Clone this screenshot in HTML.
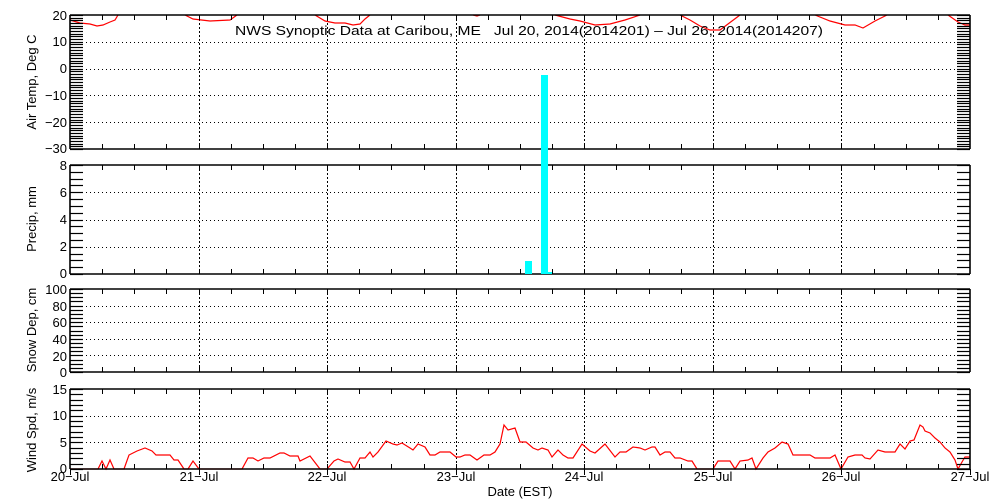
<!DOCTYPE html>
<html><head><meta charset="utf-8"><style>
html,body{margin:0;padding:0;background:#fff;width:1000px;height:500px;overflow:hidden}
svg{display:block}
text{font-family:"Liberation Sans",sans-serif;font-size:13px;fill:#000}
</style></head><body>
<svg id="s" width="1000" height="500" xmlns="http://www.w3.org/2000/svg">
<g id="g"></g>
<polyline fill="none" stroke="#f00" stroke-width="1.2" points="70,20 80,23 90,24 97,26 103,25 110,22 115,20 118,15"/>
<polyline fill="none" stroke="#f00" stroke-width="1.2" points="185,15 193,19 210,21 230,20 237,15"/>
<polyline fill="none" stroke="#f00" stroke-width="1.2" points="315,15 325,21 335,23 345,23 353,25 360,24 365,19 370,15"/>
<polyline fill="none" stroke="#f00" stroke-width="1.2" points="473,15 477,16 480,15"/>
<polyline fill="none" stroke="#f00" stroke-width="1.2" points="555,15 570,19 580,21 595,25 610,24 625,20 640,15"/>
<polyline fill="none" stroke="#f00" stroke-width="1.2" points="680,15 690,20 700,26 710,30 720,30 740,15"/>
<polyline fill="none" stroke="#f00" stroke-width="1.2" points="815,15 830,21 845,25 855,25 863,28 875,21 887,15"/>
<polyline fill="none" stroke="#f00" stroke-width="1.2" points="948,15 958,22 965,25 970,25"/>
<polyline fill="none" stroke="#f00" stroke-width="1.2" points="70,469 98,469 102,461 106,469 110,460 114,469 124,469 129,455 137,451 145,448 152,451 156,455 170,455 174,460 178,460 184,469 188,469 193,461 199,469 242,469 248,458 253,458 258,461 264,458 270,458 280,453 284,453 290,456 298,456 300,461 310,456 320,469 327,469 334,461 338,459 345,462 350,462 354,469 360,458 365,458 370,452 373,457 378,452 386,441 393,444 397,445 402,443 410,448 413,450 418,444 425,447 430,455 435,455 440,452 450,452 456,457 460,457 465,455 470,455 477,460 484,455 490,455 495,452 500,444 504,425 508,430 515,428 520,442 526,442 533,448 538,450 542,448 548,450 552,457 558,450 563,455 568,458 573,458 582,444 590,451 595,453 605,444 615,457 620,452 626,452 633,447 640,448 645,450 652,447 655,447 660,455 665,452 670,452 675,458 680,458 688,461 692,461 697,469 713,469 718,461 730,461 735,469 740,461 748,460 752,458 756,469 763,458 768,452 775,448 782,442 788,444 793,455 810,455 815,458 830,458 835,455 841,469 848,457 855,455 862,455 865,458 870,459 878,450 885,452 895,452 900,444 905,449 910,441 914,440 920,425 923,427 925,431 930,433 935,438 940,442 945,448 950,452 955,460 958,469 962,462 965,457 970,457"/>
<g id="fr"></g>
<rect x="541" y="75" width="7" height="199" fill="#0ff"/>
<rect x="525" y="261" width="7" height="13" fill="#0ff"/>
<rect x="548" y="272" width="4" height="2" fill="#0ff"/>
<text x="235" y="35" textLength="588" lengthAdjust="spacingAndGlyphs" style="white-space:pre" xml:space="preserve">NWS Synoptic Data at Caribou, ME   Jul 20, 2014(2014201) – Jul 26, 2014(2014207)</text>
<g text-anchor="end">
<text x="67" y="20">20</text><text x="67" y="46">10</text><text x="67" y="73">0</text><text x="67" y="100">−10</text><text x="67" y="127">−20</text><text x="67" y="153">−30</text>
<text x="67" y="170">8</text><text x="67" y="197">6</text><text x="67" y="224">4</text><text x="67" y="251">2</text><text x="67" y="278">0</text>
<text x="67" y="294">100</text><text x="67" y="311">80</text><text x="67" y="327">60</text><text x="67" y="344">40</text><text x="67" y="361">20</text><text x="67" y="377">0</text>
<text x="67" y="394">15</text><text x="67" y="420">10</text><text x="67" y="447">5</text><text x="67" y="473">0</text>
</g>
<g text-anchor="middle">
<text x="70" y="481">20−Jul</text><text x="199" y="481">21−Jul</text><text x="327" y="481">22−Jul</text><text x="456" y="481">23−Jul</text><text x="584" y="481">24−Jul</text><text x="713" y="481">25−Jul</text><text x="841" y="481">26−Jul</text><text x="970" y="481">27−Jul</text>
<text x="520" y="496">Date (EST)</text>
<text transform="translate(36,82) rotate(-90)">Air Temp, Deg C</text>
<text transform="translate(36,219) rotate(-90)">Precip, mm</text>
<text transform="translate(36,330) rotate(-90)">Snow Dep, cm</text>
<text transform="translate(36,430) rotate(-90)">Wind Spd, m/s</text>
</g>
</svg>
<script>
var NS="http://www.w3.org/2000/svg",g=document.getElementById("g"),fr=document.getElementById("fr");
function L(p,x1,y1,x2,y2,d,w){var l=document.createElementNS(NS,"line");l.setAttribute("x1",x1);l.setAttribute("y1",y1);l.setAttribute("x2",x2);l.setAttribute("y2",y2);l.setAttribute("stroke","#000");l.setAttribute("stroke-width",w||1);if(d)l.setAttribute("stroke-dasharray",d);p.appendChild(l);}
var P=[{t:15,b:149,mn:-30,mx:20,tk:1,gr:[10,0,-10,-20]},{t:165,b:274,mn:0,mx:8,tk:0.5,gr:[6,4,2]},{t:289,b:372,mn:0,mx:100,tk:5,gr:[80,60,40,20]},{t:389,b:469,mn:0,mx:15,tk:1,gr:[10,5]}];
var X0=70,X1=970,day=(X1-X0)/7;
P.forEach(function(p){
 function Y(v){return p.b-(v-p.mn)/(p.mx-p.mn)*(p.b-p.t);}
 p.gr.forEach(function(v){var y=Math.round(Y(v))+0.5;L(g,X0,y,X1,y,"1,3");});
 for(var d=1;d<7;d++){var x=Math.round(X0+d*day)+0.5;L(g,x,p.t,x,p.b,"2,2");}
 for(var v=p.mn;v<=p.mx+1e-6;v+=p.tk){var y=Math.round(Y(v))+0.5;L(fr,X0,y,X0+13,y,null,1.2);L(fr,X1-13,y,X1,y,null,1.2);}
 for(var h=1;h<28;h++){var x=Math.round(X0+h*day/4)+0.5;L(fr,x,p.t,x,p.t+5);L(fr,x,p.b,x,p.b-5);}
 L(fr,X0,p.t,X1,p.t,null,1.6);L(fr,X0,p.b,X1,p.b,null,1.6);L(fr,X0,p.t,X0,p.b,null,1.6);L(fr,X1,p.t,X1,p.b,null,1.6);
});
for(var d=0;d<=7;d++){var x=Math.round(X0+d*day)+0.5;L(fr,x,469,x,475);}
</script>
</body></html>
